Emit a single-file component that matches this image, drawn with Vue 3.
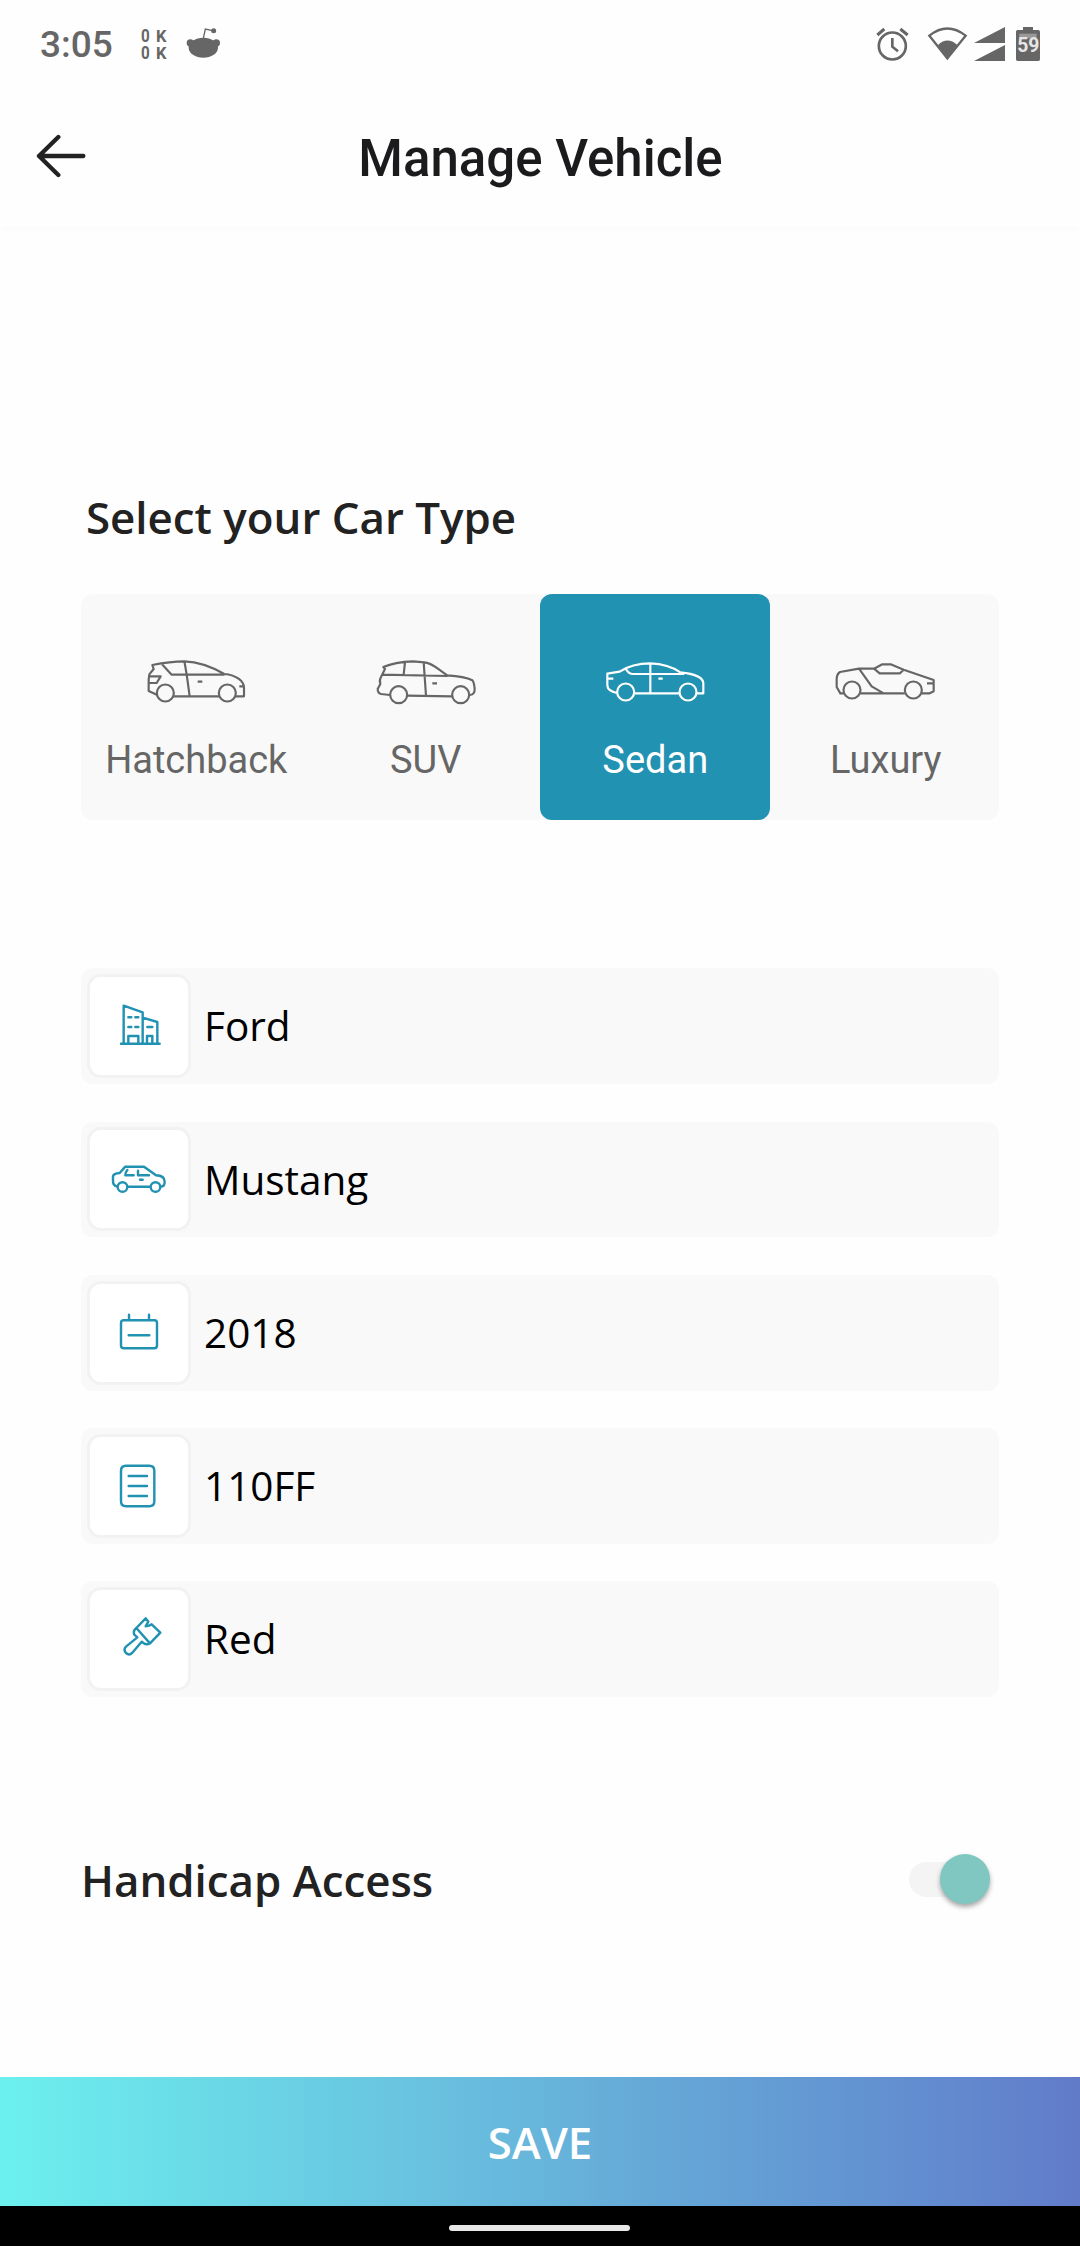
<script setup>
import { ref } from 'vue'

const selected = ref('Sedan')
const handicap = ref(true)

const carTypes = [
  {
    name: 'Hatchback',
    box: '218 530 318 150',
    path: 'M261 644L235 632V598L237 582L250 566L246 554Q300 543 342 543Q400 545 462 581C500 584 521 604 521 622V648H496M447 648H310M275 552L304 583H462M342 543C350 583 354 620 358 648M237 588H271L259 608H237M382 604H396M507 618H521',
    wheels: [[285, 638], [471, 638]]
  },
  {
    name: 'SUV',
    box: '907 530 318 150',
    path: 'M961 644L934 641Q924 638 924 626L932 611Q928 600 934 590L946 566L941 560Q975 545 1030 543L1065 546C1090 549 1103 565 1133 585Q1185 588 1208 600Q1213 605 1215 625Q1216 644 1199 644M1147 648L1012 646M937 583L1133 587M1006 546L1002 583M1062 546L1069 646M1088 609H1102',
    wheels: [[987, 643], [1173, 643]]
  },
  {
    name: 'Sedan',
    box: '215 230 318 150',
    path: 'M260 338Q232 332 231 316V280L268 274Q305 249 360 249Q414 251 450 276C492 280 519 292 519 309V339H499M447 339H312M286 264Q293 280 306 281H462M360 249V339M231 295H249M384 295H397',
    wheels: [[286, 335], [473, 335]]
  },
  {
    name: 'Luxury',
    box: '904 230 318 150',
    path: 'M942 339H932L921 320V295Q922 280 931 275L988 265H1033L1058 252H1083L1122 268L1212 299V333L1200 339H1176M1125 339H993M988 265L1026 318L1062 339M1033 265L1050 279H1111L1122 268M1192 309H1212',
    wheels: [[967, 329], [1151, 329]]
  }
]

const fields = [
  {
    value: 'Ford',
    box: '117 138 180 180',
    path: 'M153 281H269M161 281V167L218 187V281M218 203L262 216V281M175 281V258H205V281M231 281V258H247V281M175 202H184M196 202H205M175 231H184M196 231H205M232 231H247'
  },
  {
    value: 'Mustang',
    box: '117 598 180 180',
    path: 'M142 711Q129 708 129 695V680Q131 671 149 670L166 651H222L258 677Q284 678 284 696Q284 711 272 711M241 711H173M172 661Q165 669 166 677H191M204 663V677H237M210 690H218M143 712a14.500 14.500 0 1 0 29 0a14.500 14.500 0 1 0 -29 0M242 712a14.500 14.500 0 1 0 29 0a14.500 14.500 0 1 0 -29 0'
  },
  {
    value: '2018',
    box: '117 128.500 180 180',
    path: 'M161 180H253Q261 180 261 188V256Q261 264 253 264H161Q153 264 153 256V188Q153 180 161 180M177 164V180M237 164V180M176 225H238'
  },
  {
    value: '110FF',
    box: '117 587 180 180',
    path: 'M168 616H238Q253 616 253 631V723Q253 738 238 738H168Q153 738 153 723V631Q153 616 168 616M176 647H231M176 677H231M176 707H231'
  },
  {
    value: 'Red',
    box: '117 147 180 180',
    path: 'M227 175L199 204L240 250L271 218L245 193L237 197L227 199L235 185ZM199 204Q188 213 193 224L202 232L168 260Q159 269 168 279Q178 288 187 278L215 245Q228 258 240 250'
  }
]
</script>

<template>
  <div class="screen">
    <div class="status">
      <span class="time">3:05</span>
      <div class="net">
        <div v-for="line in 2" :key="line" class="rate"><b>0</b> <i>K</i></div>
      </div>
      <svg class="reddit" viewBox="558 82 105 96" width="35" height="32">
        <ellipse cx="610" cy="144" rx="44" ry="30" />
        <circle cx="571" cy="130" r="11" />
        <circle cx="649" cy="130" r="11" />
        <circle cx="641" cy="93" r="7.500" />
        <path d="M610 116L616 88L638 93" fill="none" stroke="#666" stroke-width="4" />
      </svg>
      <svg class="system" viewBox="105 72 500 114" width="166.670" height="38">
        <circle cx="157" cy="135" r="40.500" fill="none" stroke="#666" stroke-width="8" />
        <path d="M112 102L133 84M181 84L203 102" fill="none" stroke="#666" stroke-width="9" />
        <path d="M157 111V137L174 151" fill="none" stroke="#666" stroke-width="8" />
        <path d="M268 104Q322 61 377 104L322 172Z" fill="none" stroke="#666" stroke-width="7" />
        <path d="M294 132Q322 105 352 132L322 176Z" />
        <path d="M402 126L495 78V126ZM402 180L495 132V180Z" />
        <path d="M549 78H579V87H595Q600 87 600 92V175Q600 180 595 180H533Q528 180 528 175V92Q528 87 533 87H549Z" />
        <path d="M538 98H590V112H538Z" fill="#999" />
        <text x="565" y="152" text-anchor="middle" class="level">59</text>
      </svg>
    </div>

    <header class="header">
      <svg class="back" viewBox="108 402 150 132" width="50" height="44">
        <path d="M175 411L117 468L175 525M117 468H250" />
      </svg>
      <h1>Manage Vehicle</h1>
    </header>

    <main class="content">
      <h2 class="heading">Select your Car Type</h2>
      <div class="types">
        <div
          v-for="car in carTypes"
          :key="car.name"
          class="type"
          :class="{ active: car.name === selected }"
          @click="selected = car.name"
        >
          <svg :viewBox="car.box" width="106" height="50">
            <path :d="car.path" />
            <circle v-for="w in car.wheels" :key="w[0]" :cx="w[0]" :cy="w[1]" r="25.500" />
          </svg>
          <span>{{ car.name }}</span>
        </div>
      </div>

      <div class="fields">
        <div v-for="field in fields" :key="field.value" class="field">
          <div class="icon">
            <svg :viewBox="field.box" width="60" height="60"><path :d="field.path" /></svg>
          </div>
          <span>{{ field.value }}</span>
        </div>
      </div>

      <div class="access">
        <h2>Handicap Access</h2>
        <div class="toggle" :class="{ on: handicap }" @click="handicap = !handicap">
          <div class="thumb"></div>
        </div>
      </div>
    </main>

    <div class="save">SAVE</div>
    <div class="navbar"><div class="pill"></div></div>
  </div>
</template>

<style>
body {
  margin: 0;
  background: #fefefe;
}
</style>

<style scoped>
.screen {
  display: flex;
  flex-direction: column;
  width: 1080px;
  height: 2246px;
  background: #fefefe;
  font-family: "Open Sans", "Noto Sans", sans-serif;
  overflow: hidden;
}
.status {
  display: flex;
  align-items: center;
  height: 88px;
  padding: 0 38px 0 40px;
  box-sizing: border-box;
  color: #666;
  fill: #666;
  font-family: Roboto, sans-serif;
}
.time {
  width: 100px;
  font-size: 37px;
  font-weight: 500;
}
.net {
  width: 46px;
}
.rate {
  display: flex;
  align-items: baseline;
  gap: 6px;
  height: 17px;
  line-height: 17px;
}
.rate b {
  width: 10px;
  font-size: 19px;
  font-weight: 700;
  transform: scaleX(0.8);
}
.rate i {
  font-size: 16.500px;
  font-style: normal;
  font-weight: 700;
}
.reddit {
  margin-bottom: 2px;
}
.system {
  margin-left: auto;
}
.level {
  font: 700 58px Roboto, sans-serif;
  fill: #e6e6e6;
}
.header {
  display: flex;
  align-items: center;
  height: 139px;
  flex: none;
  box-shadow: 0 2px 6px rgba(0, 0, 0, 0.02);
}
.back {
  width: 50px;
  margin: 0 -86px 3px 36px;
  fill: none;
  stroke: #222;
  stroke-width: 13;
  stroke-linecap: round;
  stroke-linejoin: round;
}
h1 {
  flex: 1;
  margin: 2px 0 0 1px;
  text-align: center;
  color: #1b1b1d;
  font: 500 51px/60px Roboto, sans-serif;
}
.content {
  flex: 1;
  padding: 260px 81px 0;
}
h2 {
  margin: 0;
  color: #222;
  font-size: 43.850px;
  font-weight: 600;
  line-height: 60px;
  white-space: nowrap;
}
.heading {
  padding-left: 5px;
}
.types {
  display: flex;
  height: 226px;
  margin-top: 47px;
  border-radius: 12px;
  background: #f9f9f9;
}
.type {
  display: flex;
  flex: 1;
  flex-direction: column;
  align-items: center;
  gap: 31px;
  padding-top: 62.700px;
  box-sizing: border-box;
  border-radius: 12px;
  color: #666;
  font: 400 38px/44px Roboto, sans-serif;
}
.type span {
  padding-left: 1px;
}
.type:last-child span {
  padding-left: 3px;
}
.type svg {
  fill: none;
  stroke: currentColor;
  stroke-width: 6.500;
  stroke-linejoin: round;
}
.type.active {
  background: #2292b2;
  color: #fff;
}
.fields {
  display: flex;
  flex-direction: column;
  gap: 37.550px;
  margin-top: 148.400px;
}
.field {
  display: flex;
  align-items: center;
  gap: 13px;
  height: 115.700px;
  padding-left: 6px;
  box-sizing: border-box;
  border-radius: 12px;
  background: #f9f9f9;
  color: #000;
  font-size: 40.500px;
  line-height: 56px;
}
.field span {
  margin-top: 1px;
}
.field:first-child span,
.field:last-child span {
  margin: 0 0 1px;
}
.icon {
  display: flex;
  align-items: center;
  justify-content: center;
  width: 104px;
  height: 104px;
  box-sizing: border-box;
  border: 3px solid #f2f2f2;
  border-radius: 14px;
  background: #fff;
}
.icon svg {
  fill: none;
  stroke: #2292b2;
  stroke-width: 7.300;
  stroke-linecap: round;
  stroke-linejoin: round;
}
.access {
  display: flex;
  align-items: center;
  justify-content: space-between;
  height: 61px;
  margin-top: 153px;
}
.access h2 {
  padding-bottom: 1px;
}
.toggle {
  display: flex;
  align-items: center;
  width: 72px;
  height: 35px;
  margin: 0 18px 2px 0;
  border-radius: 18px;
  background: #f4f4f4;
}
.thumb {
  flex: none;
  width: 50px;
  height: 50px;
  border-radius: 50%;
  background: #80c7c1;
  box-shadow: 0 3px 5px rgba(0, 0, 0, 0.35);
}
.toggle.on .thumb {
  margin: -1px 0 0 31px;
}
.save {
  height: 129px;
  background: linear-gradient(90deg, #6cf0ee 0%, #68badd 46%, #65a8d7 61%, #628acf 88%, #627bc9 100%);
  color: #fff;
  font-size: 43.700px;
  font-weight: 600;
  line-height: 131px;
  text-align: center;
}
.navbar {
  display: flex;
  align-items: center;
  justify-content: center;
  height: 40px;
  padding: 4px 1px 0 0;
  box-sizing: border-box;
  background: #000;
}
.pill {
  width: 181px;
  height: 6px;
  border-radius: 3px;
  background: #e8e8e8;
}
</style>
